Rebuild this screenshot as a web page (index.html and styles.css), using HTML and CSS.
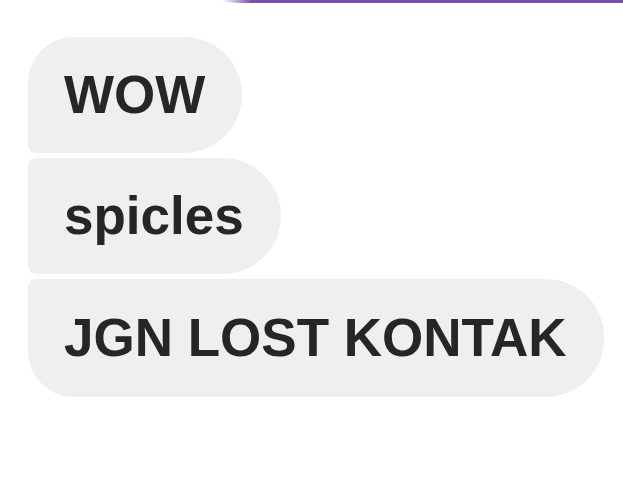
FILE: index.html
```html
<!DOCTYPE html>
<html>
<head>
<meta charset="utf-8">
<link rel="stylesheet" href="styles.css">
</head>
<body>
<div class="sent-edge"></div>
<div class="thread">
  <div class="bubble first">WOW</div>
  <div class="bubble middle">spicles</div>
  <div class="bubble last">JGN LOST KONTAK</div>
</div>
</body>
</html>
```
FILE: styles.css
```css
html, body {
  margin: 0;
  padding: 0;
  background: #ffffff;
}
body {
  width: 623px;
  height: 494px;
  overflow: hidden;
  font-family: "Liberation Sans", Arial, sans-serif;
}
.sent-edge {
  margin-left: 222px;
  height: 3px;
  background: linear-gradient(to right, rgba(122, 79, 174, 0) 0px, #7a4fae 30px, #7a4fae 100%);
  border-bottom-left-radius: 20px 3px;
}
.thread {
  display: flex;
  flex-direction: column;
  align-items: flex-start;
  gap: 5px;
  padding: 34px 0 0 28px;
}
.bubble {
  background: #efefef;
  color: #262626;
  font-weight: bold;
  font-size: 53px;
  line-height: 60px;
  padding: 28px 37px 28px 36px;
  border-radius: 8px 58px 58px 8px;
  white-space: nowrap;
}
.bubble.first {
  border-top-left-radius: 46px;
}
.bubble.last {
  border-bottom-left-radius: 46px;
  padding-top: 29px;
  padding-bottom: 29px;
}
```
